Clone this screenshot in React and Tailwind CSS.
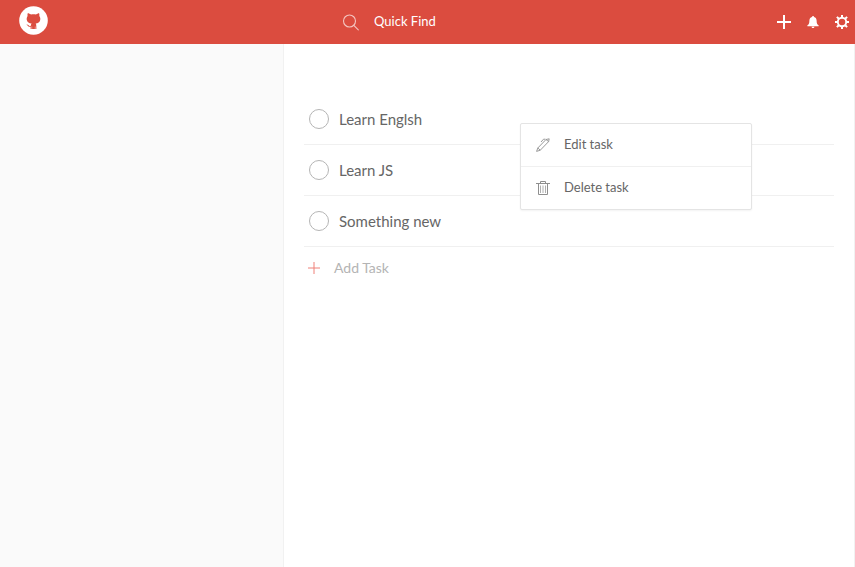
const tasks = ["Learn Englsh", "Learn JS", "Something new"];

function Logo() {
  return (
    <svg viewBox="0 0 29 29" className="size-[29px]" aria-hidden="true">
      <circle cx="14.500" cy="14.500" r="14.300" fill="#fff" />
      <path
        fill="#db4c3f"
        d="M8.700 7.200C9.700 7.100 10.900 7.800 12 8.500C13.600 8.100 15.400 8.100 17 8.500C18.100 7.800 19.300 7.100 20.100 7.200C20.500 8.300 20.500 9.300 20.300 10C21.300 11.200 21.500 12.500 21.200 14C20.800 16.300 19 17.300 16.700 17.600C17.200 18.200 17.300 19 17.300 20L17.400 23H16.300V20.500H15.900V23H13.100V20.500H12.700V23H11.600V20.800C9.500 21.200 9 19.800 8.300 19.300L7.500 18.700C8.800 18.200 9.600 19.700 10.500 19.900C11.100 20 11.500 19.900 11.800 19.700C11.800 18.800 12.100 18.100 12.600 17.600C10.100 17.300 8.300 16.300 7.800 14C7.500 12.500 7.800 11.200 8.600 10C8.400 9.300 8.400 8.300 8.700 7.200Z"
      />
    </svg>
  );
}

function SearchIcon() {
  return (
    <svg viewBox="0 0 17 17" className="size-[17px] shrink-0" fill="none" stroke="#f4c5c0" strokeWidth="1.100" strokeLinecap="round" aria-hidden="true">
      <circle cx="7.500" cy="7" r="6" />
      <path d="M11.800 11.300L16.300 15.800" />
    </svg>
  );
}

function BellIcon() {
  return (
    <svg viewBox="0 0 12 12" className="size-3" fill="#fff" aria-hidden="true">
      <path d="M6 0C6.600 0 7 0.400 7 0.900C8.800 1.400 9.600 2.800 9.600 4.500C9.600 7.500 10.300 8.500 11.600 9.300V10.200H0.400V9.300C1.700 8.500 2.400 7.500 2.400 4.500C2.400 2.800 3.200 1.400 5 0.900C5 0.400 5.400 0 6 0ZM4.600 10.700H7.400C7.400 11.500 6.800 12 6 12C5.200 12 4.600 11.500 4.600 10.700Z" />
    </svg>
  );
}

function GearIcon() {
  return (
    <svg viewBox="0 0 14 14" className="size-[14px]" fill="none" stroke="#fff" aria-hidden="true">
      <circle cx="7" cy="7" r="4.200" strokeWidth="1.900" />
      <path strokeWidth="2" d="M7 0V2.500M7 11.500V14M0 7H2.500M11.500 7H14M1.900 1.900L3.800 3.800M10.200 10.200L12.100 12.100M1.900 12.100L3.800 10.200M10.200 3.800L12.100 1.900" />
    </svg>
  );
}

function PenIcon() {
  return (
    <svg viewBox="0 0 14 14" className="size-[14px]" fill="none" stroke="#8f8f8f" strokeWidth="0.900" strokeLinejoin="round" aria-hidden="true">
      <path d="M0.600 13.400L1.800 10L10 1.500L13.200 0.800L12.600 3.600L4.300 12.200ZM1.800 10L4.300 12.200M10 1.500L12.600 3.600M9.500 1.200H7.500L5 4" />
    </svg>
  );
}

function TrashIcon() {
  return (
    <svg viewBox="0 0 14 14" className="size-[14px]" fill="none" stroke="#8f8f8f" aria-hidden="true">
      <path d="M0 2.500H14M4.500 2.500V0.500H9.500V2.500M2.500 3V13.500H11.500V3" />
      <path stroke="#b0b0b0" d="M4.500 4.500V12M7 4.500V12M9.500 4.500V12" />
    </svg>
  );
}

function Header() {
  return (
    <header className="flex h-11 items-center bg-[#db4c3f] pr-[6px] pl-[19px]">
      <a href="#home" aria-label="Home" className="mb-[3px] block">
        <Logo />
      </a>
      <label className="ml-[294px] flex items-center gap-[15px]">
        <SearchIcon />
        <input
          type="text"
          aria-label="Quick Find"
          placeholder="Quick Find"
          className="h-5 w-40 bg-transparent pb-[2px] text-[13px] text-white outline-none placeholder:text-white"
        />
      </label>
      <div className="ml-auto flex items-center gap-4">
        <button type="button" aria-label="Add">
          <svg viewBox="0 0 14 14" className="size-[14px]" stroke="#fff" strokeWidth="2" aria-hidden="true">
            <path d="M7 0V14M0 7H14" />
          </svg>
        </button>
        <button type="button" aria-label="Notifications">
          <BellIcon />
        </button>
        <button type="button" aria-label="Settings">
          <GearIcon />
        </button>
      </div>
    </header>
  );
}

function TaskMenu() {
  return (
    <div className="absolute top-[29px] right-[82px] w-[232px] rounded-xs border border-[#e4e4e4] bg-white text-[13px] text-[#666] shadow-xs">
      <button type="button" className="flex h-[43px] w-full items-center gap-[14px] border-b border-[#f0f0f0] px-[15px]">
        <PenIcon />
        Edit task
      </button>
      <button type="button" className="flex h-[42px] w-full items-center gap-[14px] px-[15px]">
        <TrashIcon />
        Delete task
      </button>
    </div>
  );
}

export default function App() {
  return (
    <div className="flex min-h-screen flex-col bg-white font-['Lato',sans-serif]">
      <Header />
      <div className="flex grow">
        <aside className="w-[284px] shrink-0 border-r border-[#f1f1f1] bg-[#fafafa]" />
        <main className="grow border-r border-[#f1f1f1] px-5 pt-[50px]">
          <ul className="relative">
            {tasks.map((task) => (
              <li key={task} className="border-b border-[#f0f0f0]">
                <label className="flex h-[50px] items-center gap-[10px] pl-[5px] text-[15px] text-[#666]">
                  <input type="checkbox" className="size-5 appearance-none rounded-full border border-[#b5b5b5] checked:bg-[#b5b5b5]" />
                  {task}
                </label>
              </li>
            ))}
            <li className="absolute inset-x-0 top-0">
              <TaskMenu />
            </li>
          </ul>
          <button type="button" className="flex h-[42px] items-center gap-[14px] pl-1 text-sm text-[#b4b4b4]">
            <svg viewBox="0 0 12 12" className="size-3" stroke="#ef8078" aria-hidden="true">
              <path d="M6 0V12M0 6H12" />
            </svg>
            Add Task
          </button>
        </main>
      </div>
    </div>
  );
}
